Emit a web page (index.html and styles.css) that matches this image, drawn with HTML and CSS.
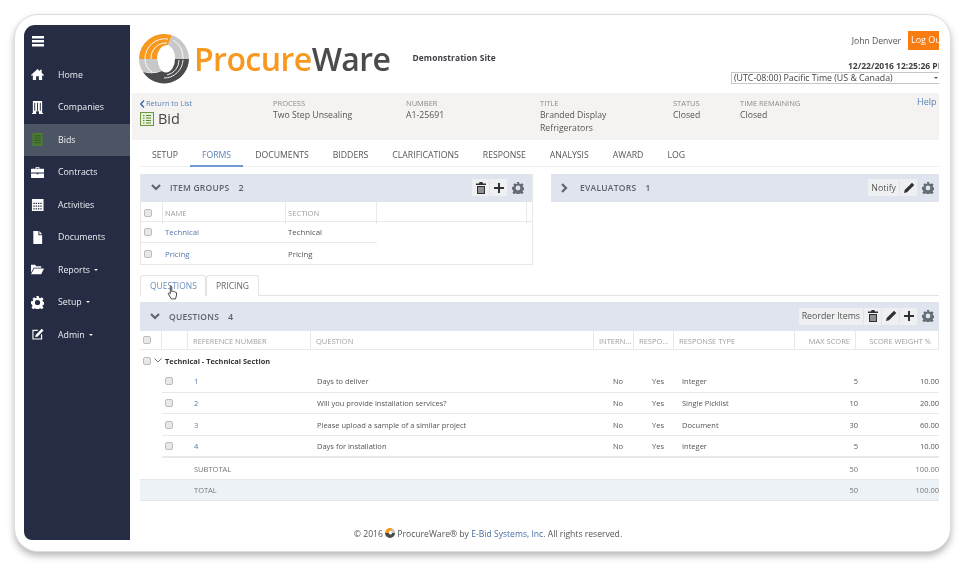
FILE: index.html
```html
<!DOCTYPE html>
<html lang="en">
<head>
<meta charset="utf-8">
<title>ProcureWare - Bid</title>
<link rel="stylesheet" href="styles.css">
</head>
<body>
<div class="frame">
<div class="screen">
  <nav class="sidebar">
    <div class="burger"><svg viewBox="0 0 12 11" width="12" height="11"><path d="M0 0h12v2.500H0zM0 4h12v2.500H0zM0 8h12v2.500H0z" fill="#fff"/></svg></div>
    <a class="nav"><svg class="ni" viewBox="0 0 14 14"><path d="M7 1 0 7.500l1 1 1-.9V13h3.500V9h3v4H12V7.600l1 .9 1-1-2.500-2.300V2h-2v1.400z" fill="#fff"/></svg><span>Home</span></a>
    <a class="nav"><svg class="ni" viewBox="0 0 14 14"><path fill-rule="evenodd" d="M2 0h10v13h1v1H8.500v-3h-3v3H1v-1h1zM3.500 2v8.500h1V2zm3 0v8.500h1V2zm3 0v8.500h1V2z" fill="#fff"/></svg><span>Companies</span></a>
    <a class="nav active"><svg class="ni" viewBox="0 0 14 14"><rect x="1.500" width="11" height="14" fill="#4c7a2e"/><path d="M3.500 3h7M3.500 5.500h7M3.500 8h7M3.500 10.500h7" stroke="#2f5a2c" stroke-width="1"/></svg><span>Bids</span></a>
    <a class="nav"><svg class="ni" viewBox="0 0 14 14"><path d="M5 1h4v2h4.500a.5.5 0 0 1 .5.500V7H0V3.500A.5.5 0 0 1 .5 3H5zm1 1v1h2V2zM0 8h6v1h2V8h6v4.500a.5.5 0 0 1-.5.500H.5a.5.5 0 0 1-.5-.5z" fill="#fff"/></svg><span>Contracts</span></a>
    <a class="nav"><svg class="ni" viewBox="0 0 14 14"><path fill-rule="evenodd" d="M1 1h12.500v13H1zM2.500 5v1.500H4V5zm2.500 0v1.500h1.500V5zm2.500 0v1.500H9V5zM10 5v1.500h1.500V5zM2.500 8v1.500H4V8zM5 8v1.500h1.500V8zm2.500 0v1.500H9V8zM10 8v1.500h1.500V8zm-7.500 3v1.500H4V11zM5 11v1.500h1.500V11zm2.500 0v1.500H9V11zm2.500 0v1.500h1.500V11z" fill="#fff"/></svg><span>Activities</span></a>
    <a class="nav"><svg class="ni" viewBox="0 0 14 14"><path d="M2.500 0H8v4.500h4V14H2.500zM9 0l3 3.500H9z" fill="#fff"/></svg><span>Documents</span></a>
    <a class="nav"><svg class="ni" viewBox="0 0 14 14"><path d="M0 2h4.500l1 1.500H11V5H3L0 10.500zM3.500 6H14l-3 6H0z" fill="#fff"/></svg><span>Reports<i class="caret"></i></span></a>
    <a class="nav"><svg class="ni" viewBox="0 0 16 16"><use href="#gear" fill="#fff"/></svg><span>Setup<i class="caret"></i></span></a>
    <a class="nav"><svg class="ni" viewBox="0 0 14 14"><path d="M1.500 2H8L6.800 3.200H2.700v8.100h8V7.500L12 6.300V12.500H1.500z" fill="#fff"/><path d="M5 7.500 11.500.8l2 2L7 9.300l-2.500.5z" fill="#fff"/></svg><span>Admin<i class="caret"></i></span></a>
  </nav>
  <main class="main">
    <header class="top">
      <div class="brand">
        <svg class="ring" viewBox="0 0 50 50" width="50" height="50">
          <path d="M0 25a25 25 0 0 1 33-23.700L29 11Q20 12 18 25z" fill="#f7981f"/>
          <path d="M33 1.300A25 25 0 0 1 50 25H36Q36 14 29 11z" fill="#c8c8c8"/>
          <path d="M0 25h18q0 8 5 12Q12 40 4 38 0 32 0 25z" fill="#c8c8c8"/>
          <path d="M18 25h32a25 25 0 0 1-46 13q10 3 19-1-5-4-5-12z" fill="#4b4b4d"/>
          <ellipse cx="27" cy="25" rx="9" ry="13.500" fill="#fff"/>
          <g fill="none" stroke="#fff" stroke-width=".9">
            <path d="M6 25A20 20 0 0 1 29 5"/>
            <path d="M12 25A15 15 0 0 1 28 9"/>
            <path d="M34 6A20 20 0 0 1 44 25"/>
            <path d="M6 25q0 8 7 13"/>
            <path d="M44 26A19 19 0 0 1 25 44"/>
            <path d="M40 26A15 15 0 0 1 28 41"/>
          </g>
        </svg>
        <span class="wordmark"><b class="w1">Procure</b><b class="w2">Ware</b></span>
        <span class="demo">Demonstration Site</span>
      </div>
      <div class="user">
        <div class="urow"><span class="uname">John Denver</span><span class="logout">Log Out</span></div>
        <div class="clock">12/22/2016 12:25:26 PM</div>
        <div class="tz"><span>(UTC-08:00) Pacific Time (US &amp; Canada)</span><i class="tzc"></i></div>
      </div>
    </header>
    <section class="info">
      <div class="c-a"><a class="back"><svg viewBox="0 0 5 8" width="5" height="8"><path d="M4 .5.8 4 4 7.500" fill="none" stroke="#3d6ba8" stroke-width="1.500"/></svg>Return to List</a>
        <div class="title"><svg viewBox="0 0 14 14" width="14" height="14"><rect x=".5" y=".5" width="13" height="13" fill="#e7f0d8" stroke="#6d9a3f"/><path d="M3 3.500h1.500M3 6h1.500M3 8.500h1.500M3 11h1.500M6 3.500h5M6 6h5M6 8.500h5M6 11h5" stroke="#5b8a34" stroke-width="1.200"/></svg><span>Bid</span></div></div>
      <div class="c-b"><label>PROCESS</label><p>Two Step Unsealing</p></div>
      <div class="c-c"><label>NUMBER</label><p>A1-25691</p></div>
      <div class="c-d"><label>TITLE</label><p>Branded Display<br>Refrigerators</p></div>
      <div class="c-e"><label>STATUS</label><p>Closed</p></div>
      <div class="c-f"><label>TIME REMAINING</label><p>Closed</p></div>
      <a class="help">Help (?)</a>
    </section>
    <div class="tabs">
      <a>SETUP</a><a class="on">FORMS</a><a>DOCUMENTS</a><a>BIDDERS</a><a>CLARIFICATIONS</a><a>RESPONSE</a><a>ANALYSIS</a><a>AWARD</a><a>LOG</a>
    </div>
    <div class="two">
      <section class="panel groups">
        <div class="phead"><svg class="chev" viewBox="0 0 10 7" width="10" height="7"><path d="M1 1l4 4 4-4" fill="none" stroke="#5f6670" stroke-width="2.200"/></svg><h3>ITEM GROUPS</h3><em>2</em>
          <div class="tools"><span class="btn ic"><svg viewBox="0 0 12 12" width="12" height="12"><use href="#trash"/></svg></span><span class="btn ic"><svg viewBox="0 0 12 12" width="12" height="12"><use href="#plus"/></svg></span><span class="ic"><svg viewBox="0 0 16 16" width="12" height="12"><use href="#gear" fill="#666b73"/></svg></span></div></div>
        <div class="g-row g-h"><span class="cb-c"><i class="cb"></i></span><span>NAME</span><span>SECTION</span><span></span><span></span></div>
        <div class="g-row g-b"><span class="cb-c"><i class="cb"></i></span><a>Technical</a><span>Technical</span></div>
        <div class="g-row g-b"><span class="cb-c"><i class="cb"></i></span><a>Pricing</a><span>Pricing</span></div>
      </section>
      <section class="panel evals">
        <div class="phead"><svg class="chev" viewBox="0 0 7 10" width="7" height="10"><path d="M1 1l4 4-4 4" fill="none" stroke="#5f6670" stroke-width="2.200"/></svg><h3>EVALUATORS</h3><em>1</em>
          <div class="tools"><span class="btn">Notify</span><span class="btn ic"><svg viewBox="0 0 12 12" width="12" height="12"><use href="#pencil"/></svg></span><span class="ic"><svg viewBox="0 0 16 16" width="12" height="12"><use href="#gear" fill="#666b73"/></svg></span></div></div>
      </section>
    </div>
    <div class="subtabs"><a class="on">QUESTIONS</a><a>PRICING</a></div>
    <section class="panel questions">
      <div class="phead"><svg class="chev" viewBox="0 0 10 7" width="10" height="7"><path d="M1 1l4 4 4-4" fill="none" stroke="#5f6670" stroke-width="2.200"/></svg><h3>QUESTIONS</h3><em>4</em>
        <div class="tools"><span class="btn">Reorder Items</span><span class="btn ic"><svg viewBox="0 0 12 12" width="12" height="12"><use href="#trash"/></svg></span><span class="btn ic"><svg viewBox="0 0 12 12" width="12" height="12"><use href="#pencil"/></svg></span><span class="btn ic"><svg viewBox="0 0 12 12" width="12" height="12"><use href="#plus"/></svg></span><span class="ic"><svg viewBox="0 0 16 16" width="12" height="12"><use href="#gear" fill="#666b73"/></svg></span></div></div>
      <div class="q-row q-h"><span class="cb-c"><i class="cb"></i></span><span></span><span>REFERENCE NUMBER</span><span>QUESTION</span><span>INTERN...</span><span>RESPO...</span><span>RESPONSE TYPE</span><span class="r">MAX SCORE</span><span class="r">SCORE WEIGHT %</span></div>
      <div class="q-group"><span class="cb-c"><i class="cb"></i></span><svg viewBox="0 0 8 5" width="8" height="5"><path d="M.5.5 4 4 7.500.5" fill="none" stroke="#666" stroke-width=".9"/></svg><b>Technical - Technical Section</b></div>
      <div class="q-row q-b"><span class="cb-c"><i class="cb"></i></span><span class="n">1</span><span>Days to deliver</span><span class="ctr">No</span><span class="ctr">Yes</span><span class="ty">Integer</span><span class="val">5</span><span class="val w">10.00</span></div>
      <div class="q-row q-b"><span class="cb-c"><i class="cb"></i></span><span class="n">2</span><span>Will you provide installation services?</span><span class="ctr">No</span><span class="ctr">Yes</span><span class="ty">Single Picklist</span><span class="val">10</span><span class="val w">20.00</span></div>
      <div class="q-row q-b"><span class="cb-c"><i class="cb"></i></span><span class="n">3</span><span>Please upload a sample of a similar project</span><span class="ctr">No</span><span class="ctr">Yes</span><span class="ty">Document</span><span class="val">30</span><span class="val w">60.00</span></div>
      <div class="q-row q-b thick"><span class="cb-c"><i class="cb"></i></span><span class="n">4</span><span>Days for installation</span><span class="ctr">No</span><span class="ctr">Yes</span><span class="ty">Integer</span><span class="val">5</span><span class="val w">10.00</span></div>
      <div class="q-row q-t"><span></span><span></span><span>SUBTOTAL</span><span></span><span></span><span></span><span></span><span class="val">50</span><span class="val w">100.00</span></div>
      <div class="q-row q-t tot"><span></span><span></span><span>TOTAL</span><span></span><span></span><span></span><span></span><span class="val">50</span><span class="val w">100.00</span></div>
    </section>
    <footer class="foot">© 2016 <svg viewBox="0 0 10 10" width="10" height="10"><path d="M0 5a5 5 0 0 1 5-5h2v3a2 2 0 0 0-3 2z" fill="#f7981f"/><path d="M7 0a5 5 0 0 1 3 5H6.500A2 2 0 0 0 6 3z" fill="#c6c6c6"/><path d="M0 5h4a1.500 1.500 0 0 0 3 0h3a5 5 0 0 1-10 0z" fill="#4b4b4d"/></svg> ProcureWare® by <a>E-Bid Systems, Inc.</a> All rights reserved.</footer>
  </main>
</div>
</div>
<svg class="cursor" viewBox="0 0 12 16" width="11" height="15"><path d="M3.500 1.200c.8-.6 1.700 0 1.700.8v5l.4-.1c.5-.5 1.300-.3 1.600.3.600-.4 1.300-.2 1.600.4.600-.3 1.300 0 1.500.6.300 1.700.1 3.300-.5 5l-.6 1.800H4.800L1.500 9.800c-.5-.7.300-1.700 1.100-1.300l1 .8V2z" fill="#fff" stroke="#222" stroke-width=".9"/></svg>
<svg class="defs" width="0" height="0">
  <defs>
    <path id="trash" d="M4.500 0h3l.5 1.500h3V3H1V1.500h3zM2 4h8v8H2zm1.500 1v6h1V5zm2 0v6h1V5zm2 0v6h1V5z" fill="#2f3136" fill-rule="evenodd"/>
    <path id="plus" d="M5 1h2v4h4v2H7v4H5V7H1V5h4z" fill="#2f3136"/>
    <path id="pencil" d="M9 .8 11.300 3 4 10.300 1 11l.7-3z" fill="#2f3136"/>
    <path id="gear" fill-rule="evenodd" d="M6.500 0h3l.4 2.200 1.500.6L13.300 1.500l2.100 2.100-1.300 1.900.6 1.500 2.300.5v3l-2.300.4-.6 1.500 1.300 1.900-2.100 2.100-1.900-1.300-1.500.6-.4 2.200h-3l-.4-2.200-1.500-.6-1.900 1.300-2.100-2.100 1.300-1.900-.6-1.500L0 9.500v-3l2.300-.5.6-1.500L1.600 3.600l2.100-2.100 1.900 1.300 1.500-.6zM8 4.800a3.200 3.200 0 1 0 0 6.400 3.200 3.200 0 0 0 0-6.400z"/>
  </defs>
</svg>
</body>
</html>
```
FILE: styles.css
```css
* { box-sizing: border-box; }
html, body { margin: 0; height: 573px; overflow: hidden; background: #fff; }
body { font-family: "Open Sans", "Liberation Sans", sans-serif; font-size: 9px; color: #555; position: relative; }
p, h3 { margin: 0; }
a { color: #4a6fa5; }

.frame { position: absolute; left: 14px; top: 14px; width: 937px; height: 538px; background: #fff; border: 1px solid #dedede; border-radius: 24px; box-shadow: 0 4px 7px rgba(0,0,0,.28); padding: 10px 10px 11px 9px; }
.screen { display: flex; height: 515px; width: 915px; overflow: hidden; border-radius: 11px 0 0 8px; filter: blur(.35px); }
.sidebar { width: 106px; flex: none; background: #252c43; color: #e9ebf0; }
.burger { height: 33.500px; padding: 11px 0 0 8px; line-height: 0; }
.nav { display: flex; align-items: center; height: 32.500px; color: #eceef2; font-size: 8.800px; }
.nav.active { background: #4c5564; }
.ni { width: 13px; height: 13px; margin: 0 14px 0 7px; flex: none; }
.caret { display: inline-block; margin-left: 4px; vertical-align: 2px; border: 2.500px solid transparent; border-top-color: #eceef2; border-bottom: 0; }

.main { flex: 1; min-width: 0; display: flex; flex-direction: column; overflow: hidden; }
.top { height: 68px; flex: none; display: flex; justify-content: space-between; }
.brand { display: flex; align-items: flex-start; padding: 9px 0 0 9px; }
.ring { flex: none; width: 50px; height: 50px; }
.wordmark { font-size: 32px; line-height: 50px; letter-spacing: -.55px; margin-left: 5px; white-space: nowrap; }
.wordmark b { font-weight: 600; }
.w1 { color: #f7981f; }
.w2 { color: #4b4b4d; }
.demo { font-size: 8.400px; font-weight: 700; color: #3c3f44; margin: 18px 0 0 22px; letter-spacing: .1px; white-space: nowrap; }
.user { width: 208px; flex: none; overflow: hidden; display: flex; flex-direction: column; align-items: flex-end; padding-top: 6px; }
.urow { width: 100%; display: flex; justify-content: flex-end; align-items: center; height: 19px; }
.uname { font-size: 8.600px; color: #555; margin-right: 7px; }
.logout { display: block; width: 31px; height: 19px; overflow: hidden; white-space: nowrap; padding: 2px 0 0 3px; color: #fff; background: #f97c12; font-size: 9px; line-height: 13px; }
.clock { width: 100%; white-space: nowrap; font-size: 8.500px; font-weight: 700; color: #3e3e3e; margin-top: 10px; padding-left: 117px; height: 11px; line-height: 11px; overflow: hidden; }
.tz { width: 100%; height: 12px; margin-top: 1px; border: 1px solid #c6c6c6; border-right: 0; font-size: 8.800px; line-height: 10px; padding: 0 0 0 2px; color: #444; white-space: nowrap; display: flex; justify-content: space-between; align-items: center; }
.tzc { width: 0; height: 0; border: 2px solid transparent; border-top-color: #555; border-bottom: 0; margin-right: 1px; }

.info { height: 47px; flex: none; margin-left: 2px; background: #f5f3f1; position: relative; overflow: hidden; display: grid; grid-template-columns: 133px 133px 134px 133px 67px 1fr; padding: 5px 0 0 8px; }
.info label { display: block; font-size: 7.500px; color: #8b8b8b; line-height: 11px; }
.info p { font-size: 8.700px; color: #555; line-height: 12.500px; }
.back { display: flex; align-items: center; font-size: 7.400px; color: #5b82b5; line-height: 11px; gap: 1px; }
.title { display: flex; align-items: center; gap: 4px; margin-top: 1px; }
.title span { font-size: 14.500px; color: #444; line-height: 18px; }
.help { position: absolute; left: 785px; top: 2px; font-size: 9px; color: #5b82b5; white-space: nowrap; }

.tabs { height: 27px; flex: none; margin: 0 0 0 10px; display: flex; align-items: flex-start; border-bottom: 1px solid #eee; }
.tabs a { color: #555; font-size: 8.700px; line-height: 30px; height: 27px; padding: 0 12px; flex: none; }
.tabs a.on { color: #5b82b5; border-bottom: 2px solid #6f9bd0; }

.two { display: flex; gap: 18px; margin: 7px 0 0 10px; flex: none; }
.panel { border: 1px solid #e8e8e8; border-top: 0; background: #fff; }
.groups { width: 393px; height: 91px; }
.evals { flex: 1; border: 0; }
.phead { height: 28px; background: #dfe4ef; display: flex; align-items: center; padding: 0 5px 0 10px; color: #5e6269; }
.two .phead { padding-bottom: 1px; }
.phead h3 { font-size: 8.500px; font-weight: 600; color: #5e6269; letter-spacing: .25px; margin-left: 9px; }
.evals h3 { margin-left: 12px; }
.phead em { font-style: normal; font-size: 9px; font-weight: 600; margin-left: 9px; }
.tools { margin-left: auto; display: flex; align-items: center; gap: 1px; }
.groups .tools { margin-right: 3px; }
.btn { background: #eef0f1; height: 17px; display: flex; align-items: center; padding: 0 3px; font-size: 8.800px; color: #555; }
.btn.ic { width: 17px; justify-content: center; padding: 0; }
.ic { display: flex; align-items: center; }
.tools > .ic:last-child { margin-left: 4px; }

.cb { display: block; width: 8px; height: 8px; border: 1px solid #bcbcbc; border-radius: 2px; background: #e8e8e8; }
.cb-c { display: flex; align-items: center; padding-left: 3px; height: 100%; }

.g-row { display: grid; grid-template-columns: 22px 123px 91px 150px 1fr; align-items: center; }
.g-h { height: 20px; color: #a0a0a0; font-size: 7.600px; border-bottom: 1px solid #e9e9e9; }
.g-h span { height: 100%; line-height: 22px; border-right: 1px solid #e9e9e9; padding-left: 2px; }
.g-h .cb-c { padding-left: 3px; }
.g-h span:last-child { border: 0; }
.g-row.g-b { width: 236px; grid-template-columns: 22px 123px 91px; height: 21px; font-size: 7.800px; color: #555; border-bottom: 1px solid #e9e9e9; }
.g-b:last-child { border-bottom: 0; }
.g-b a { padding-left: 2px; color: #5478a8; }
.g-b span { padding-left: 2px; }
.g-b .cb-c { padding-left: 3px; }

.subtabs { display: flex; margin: 10px 0 0 10px; height: 21px; border-bottom: 1px solid #e4e4e4; flex: none; }
.subtabs a { font-size: 8.500px; line-height: 20px; padding: 0 9px; color: #666; border: 1px solid #e4e4e4; border-bottom: 0; border-radius: 3px 3px 0 0; height: 21px; background: #fff; }
.subtabs a.on { color: #6f8fbf; width: 66px; }
.subtabs a:last-child { width: 53px; }

.questions { margin: 6px 0 0 10px; border: 0; }
.questions .phead { height: 29px; padding-bottom: 1px; }
.q-row { display: grid; grid-template-columns: 22px 26px 123px 283px 40px 40px 121px 61px 1fr; align-items: center; font-size: 7.500px; color: #555; }
.q-h { height: 19px; color: #a0a0a0; border-bottom: 1px solid #e9e9e9; }
.q-h span { height: 100%; line-height: 20px; border-right: 1px solid #e9e9e9; padding: 0 5px; white-space: nowrap; overflow: hidden; }
.q-h .cb-c { padding: 0 0 0 3px; }
.q-h .r { text-align: right; padding-right: 5px; }
.q-h .r:last-child { padding-right: 7px; }
.q-group { height: 21px; display: flex; align-items: center; font-size: 7.400px; color: #333; }
.q-group .cb-c { width: 11px; }
.q-group svg { margin: 0 3px; }
.q-b { height: 21.700px; margin-left: 22px; grid-template-columns: 26px 123px 283px 40px 40px 121px 63px 1fr; border-bottom: 1px solid #e9e9e9; }
.q-b .n { color: #5478a8; }
.q-b > span { padding-left: 6px; }
.q-b > .cb-c { padding-left: 3px; }
.q-b > .ctr { text-align: center; padding-left: 8px; }
.q-b > .ty { padding-left: 8px; }
.val { text-align: right; white-space: nowrap; }
.q-t { height: 21.500px; color: #777; grid-template-columns: 22px 26px 123px 283px 40px 40px 121px 63px 1fr; }
.q-t > span:nth-child(3) { padding-left: 6px; }
.thick { border-bottom-width: 2px; }
.tot { background: #edf2f6; border-bottom: 1px solid #dfe5eb; border-top: 1px solid #e4e9ef; }

.foot { margin-top: auto; margin-bottom: -3px; height: 16px; text-align: center; font-size: 8.600px; color: #555; line-height: 14px; padding-right: 93px; }
.foot svg { vertical-align: -1px; }
.foot a { color: #4a6fa5; }

.cursor { position: absolute; left: 167px; top: 285px; }
.defs { position: absolute; }
```
